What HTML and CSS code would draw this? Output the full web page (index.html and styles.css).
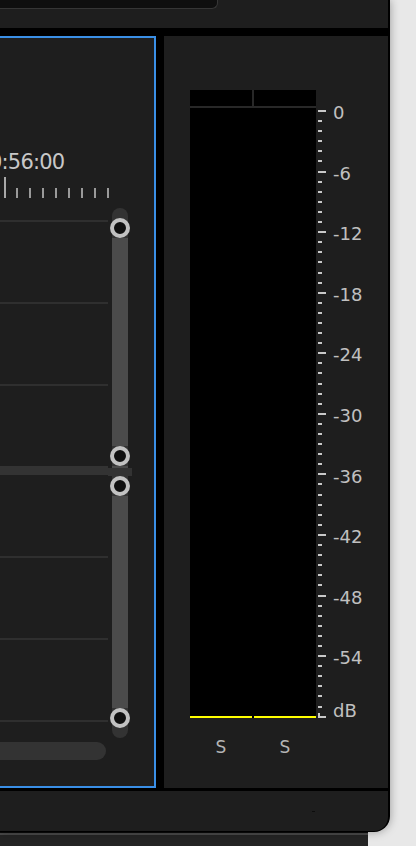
FILE: index.html
```html
<!DOCTYPE html>
<html>
<head>
<meta charset="utf-8">
<link rel="stylesheet" href="styles.css">
</head>
<body>
<div class="window">
  <div class="toppanel"><div class="tabbox"></div></div>
  <div class="mid">
    <div class="lp">
      <div class="time">0:56:00</div>
      <div class="ticks">
        <span class="tk tall"></span>
        <span class="tk"></span><span class="tk"></span><span class="tk"></span><span class="tk"></span>
        <span class="tk"></span><span class="tk"></span><span class="tk"></span><span class="tk"></span>
      </div>
      <div class="graph">
        <div class="lines">
          <div class="gl first"></div>
          <div class="gl"></div>
          <div class="gl"></div>
          <div class="band"><div class="band-a"></div><div class="band-b"></div></div>
          <div class="gl"></div>
          <div class="gl"></div>
          <div class="gl"></div>
        </div>
        <div class="track">
          <div class="knob"></div>
          <div class="seg s1"></div>
          <div class="knob"></div>
          <div class="seg s2"></div>
          <div class="knob"></div>
          <div class="seg s3"></div>
          <div class="knob"></div>
        </div>
      </div>
      <div class="hscroll"></div>
    </div>
    <div class="rp">
      <div class="meterwrap">
        <div class="meter">
          <div class="mhead"><div class="cell"></div><div class="cell"></div></div>
          <div class="mbody"><div class="peaks"><div class="peak"></div><div class="peak"></div></div></div>
        </div>
        <div class="scale">
          <i class="mj"></i><i></i><i></i><i></i><i></i><i></i>
          <i class="mj"></i><i></i><i></i><i></i><i></i><i></i>
          <i class="mj"></i><i></i><i></i><i></i><i></i><i></i>
          <i class="mj"></i><i></i><i></i><i></i><i></i><i></i>
          <i class="mj"></i><i></i><i></i><i></i><i></i><i></i>
          <i class="mj"></i><i></i><i></i><i></i><i></i><i></i>
          <i class="mj"></i><i></i><i></i><i></i><i></i><i></i>
          <i class="mj"></i><i></i><i></i><i></i><i></i><i></i>
          <i class="mj"></i><i></i><i></i><i></i><i></i><i></i>
          <i class="mj"></i><i></i><i></i><i></i><i></i><i></i>
          <i class="mj last"></i>
        </div>
        <div class="labels">
          <div class="lb">0</div>
          <div class="lb">-6</div>
          <div class="lb">-12</div>
          <div class="lb">-18</div>
          <div class="lb">-24</div>
          <div class="lb">-30</div>
          <div class="lb">-36</div>
          <div class="lb">-42</div>
          <div class="lb">-48</div>
          <div class="lb">-54</div>
          <div class="lb db">dB</div>
        </div>
      </div>
      <div class="chan"><span>S</span><span>S</span></div>
    </div>
  </div>
  <div class="botpanel"><span class="dot"></span></div>
</div>
<div class="below"></div>
</body>
</html>
```
FILE: styles.css
```css
html, body {
  margin: 0;
  padding: 0;
}
body {
  width: 416px;
  height: 846px;
  overflow: hidden;
  background: #e8e8e8;
  font-family: "DejaVu Sans", "Liberation Sans", sans-serif;
}
.window {
  width: 390px;
  height: 832px;
  box-sizing: border-box;
  padding-right: 2px;
  background: #000;
  border-bottom-right-radius: 16px;
  overflow: hidden;
  display: flex;
  flex-direction: column;
  box-shadow: 0 0 10px rgba(0, 0, 0, 0.35);
  position: relative;
  z-index: 1;
}
.toppanel {
  flex: none;
  height: 28px;
  background: #1e1e1e;
  margin-bottom: 8px;
}
.tabbox {
  width: 218px;
  height: 9px;
  box-sizing: border-box;
  background: #0f0f0f;
  border-right: 1px solid #363636;
  border-bottom: 1px solid #363636;
  border-bottom-right-radius: 6px;
}
.mid {
  flex: none;
  height: 752px;
  display: flex;
  gap: 8px;
}
.lp {
  width: 156px;
  flex: none;
  box-sizing: border-box;
  border: 2px solid #3a8fe6;
  border-left: none;
  background: #1e1e1e;
  overflow: hidden;
}
.time {
  margin-top: 112px;
  margin-left: -11px;
  height: 25px;
  line-height: 25px;
  font-size: 21px;
  letter-spacing: -0.8px;
  color: #c8c8c8;
  white-space: nowrap;
}
.ticks {
  margin-top: 2px;
  height: 21px;
  display: flex;
  align-items: flex-end;
  padding-left: 4px;
  gap: 11px;
}
.tk {
  display: block;
  width: 2px;
  height: 10px;
  background: #9a9a9a;
}
.tk.tall {
  height: 21px;
  margin-right: -1px;
  background: #a8a8a8;
}
.graph {
  margin-top: 10px;
  height: 530px;
  display: flex;
}
.lines {
  width: 108px;
  flex: none;
  display: flex;
  flex-direction: column;
}
.gl {
  height: 2px;
  background: #2f2f2f;
  margin-top: 80px;
  flex: none;
}
.gl.first {
  margin-top: 12px;
}
.band {
  position: relative;
  z-index: 1;
  margin-top: 80px;
  width: 132px;
  height: 10px;
  flex: none;
  display: flex;
}
.band-a {
  width: 108px;
  height: 9px;
  background: #333;
  align-self: flex-start;
}
.band-b {
  width: 24px;
  height: 8px;
  background: #333;
  align-self: flex-end;
}
.track {
  margin-left: 4px;
  width: 16px;
  height: 530px;
  flex: none;
  box-sizing: border-box;
  padding: 10px 0;
  background: #333;
  border-radius: 8px;
  display: flex;
  flex-direction: column;
  align-items: center;
}
.knob {
  width: 20px;
  height: 20px;
  flex: none;
  box-sizing: border-box;
  border: 4px solid #c2c2c2;
  background: #111;
  border-radius: 50%;
}
.seg {
  width: 16px;
  flex: none;
  background: #4b4b4b;
}
.s1 { height: 208px; }
.s2 { height: 10px; }
.s3 { height: 212px; }
.hscroll {
  margin-top: 4px;
  margin-left: -20px;
  width: 126px;
  height: 18px;
  border-radius: 9px;
  background: #333;
}
.rp {
  flex: 1;
  background: #1e1e1e;
}
.meterwrap {
  display: flex;
  align-items: flex-start;
  margin-top: 54px;
  padding-left: 26px;
}
.meter {
  width: 126px;
  flex: none;
  display: flex;
  flex-direction: column;
  gap: 2px;
  background: #282828;
}
.mhead {
  height: 16px;
  display: flex;
  gap: 2px;
}
.cell {
  flex: 1;
  background: #000;
}
.mbody {
  height: 610px;
  background: #000;
  display: flex;
  align-items: flex-end;
}
.peaks {
  width: 100%;
  display: flex;
  gap: 2px;
}
.peak {
  flex: 1;
  height: 2px;
  background: #ffff00;
}
.scale {
  margin-left: 2px;
  margin-top: 20px;
  width: 8px;
  height: 608px;
  flex: none;
  display: flex;
  flex-direction: column;
  justify-content: space-between;
}
.scale i {
  display: block;
  width: 4px;
  height: 2px;
  background: #c8c8c8;
}
.scale i.mj {
  width: 8px;
}
.scale i.last {
  position: relative;
}
.scale i.last::before {
  content: "";
  position: absolute;
  left: 0;
  bottom: 0;
  width: 2px;
  height: 5px;
  background: #c8c8c8;
}
.labels {
  margin-left: 7px;
  margin-top: 13px;
  display: flex;
  flex-direction: column;
  font-size: 18px;
  color: #c0c0c0;
}
.lb {
  height: 60.6px;
  line-height: 20px;
  white-space: nowrap;
}
.lb.db {
  height: 20px;
  margin-top: -8px;
}
.chan {
  display: flex;
  gap: 2px;
  padding-left: 26px;
  margin-top: 16px;
}
.chan span {
  width: 62px;
  text-align: center;
  font-size: 17px;
  line-height: 20px;
  color: #b4b4b4;
}
.botpanel {
  flex: none;
  margin-top: 3px;
  height: 40px;
  box-sizing: border-box;
  padding-top: 20px;
  padding-left: 312px;
  background: #1e1e1e;
  border-bottom-right-radius: 14px;
}
.dot {
  display: block;
  width: 3px;
  height: 1px;
  background: #0d0d0d;
}
.below {
  width: 368px;
  height: 14px;
  background: linear-gradient(#0b0b0b 0 1px, #4a4a4a 1px 3px, #242424 3px);
}
```
